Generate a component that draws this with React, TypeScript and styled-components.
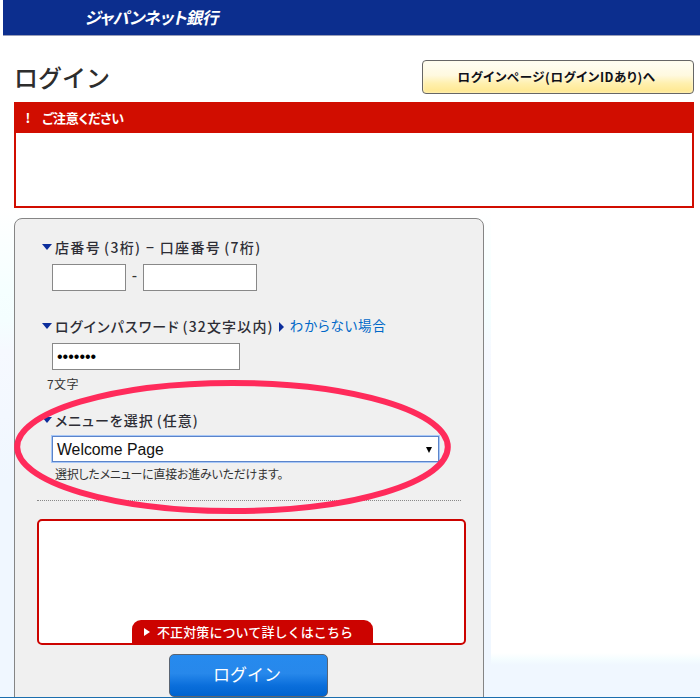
import React from 'react';
import styled, { createGlobalStyle } from 'styled-components';

const Global = createGlobalStyle`
  * { box-sizing: border-box; }
  html, body { margin: 0; padding: 0; overflow: hidden; }
  body { font-family: "Liberation Sans", "Noto Sans CJK JP", sans-serif; background: #fff; color: #333; }
  input, button { font: inherit; margin: 0; }
`;

const Page = styled.div`
  position: relative;
  width: 700px;
  height: 698px;
  overflow: hidden;
  display: flex;
  flex-direction: column;
  background: linear-gradient(#fff 0, #fff 208px, #f5ffff 290px, #f4feff 320px, #f6f9ff 350px, #f0f7ff 480px, #f0f7ff 100%);
  border-bottom: 1px solid #1b6eae;
`;

const Header = styled.header`
  height: 36px;
  flex: none;
  margin-left: 3px;
  padding-left: 83px;
  background: #0c2e8e;
  border-bottom: 1px solid #999eb8;
`;

const Logo = styled.div`
  width: 132px;
  color: #fff;
  font: 700 16.5px/34px "Noto Sans CJK JP", sans-serif;
  font-feature-settings: "palt";
  letter-spacing: -0.55px;
  white-space: nowrap;
  transform: skewX(-12deg);
`;

const TopArea = styled.div`
  flex: none;
  height: 172px;
  padding: 0 6px 0 14px;
  background: #fff;
`;

const TitleRow = styled.div`
  display: flex;
  justify-content: space-between;
  height: 66px;
  padding-top: 24px;
`;

const Title = styled.h1`
  margin: 0;
  font: 500 24px/34px "Noto Sans CJK JP", sans-serif;
  color: #2d2d2d;
`;

const PageLink = styled.button`
  width: 272px;
  height: 34px;
  padding: 0 3px 0 0;
  border: 1px solid #666;
  border-radius: 4px;
  background: linear-gradient(#fffef5 0%, #fff9df 45%, #fff0ae 70%, #ffe78d 100%);
  box-shadow: inset 0 0 3px #fff8dc;
  font: 700 12.5px/30px "Noto Sans CJK JP", sans-serif;
  font-feature-settings: "palt";
  letter-spacing: 0.58px;
  color: #101018;
  white-space: nowrap;
`;

const Notice = styled.section`
  height: 106px;
  border: 2px solid #d10d00;
  background: #fff;
`;

const NoticeHead = styled.div`
  display: flex;
  height: 29px;
  padding-left: 8px;
  gap: 10px;
  background: #d10d00;
  color: #fff;
  font: 700 13px/28px "Noto Sans CJK JP", sans-serif;
`;

const NoticeMark = styled.span`
  width: 8px;
  text-align: center;
`;

const NoticeText = styled.span`
  font-feature-settings: "palt";
  letter-spacing: -0.25px;
`;

const Body = styled.main`
  display: flex;
  flex: 1;
  min-height: 0;
  padding-left: 14px;
`;

const Panel = styled.form`
  flex: none;
  width: 470px;
  height: 540px;
  margin-top: 10px;
  padding: 18px 0 0 28px;
  border: 1px solid #858585;
  border-radius: 8px;
  background: #f0f0f0;
  display: flex;
  flex-direction: column;
  align-items: flex-start;
`;

const Side = styled.aside`
  flex: 1;
  height: 457px;
  margin-left: 7px;
  background: linear-gradient(#fff 445px, #f5fdff 451px, #f0f7ff 100%);
`;

const Label = styled.div<{ $top?: number; $spacing: number }>`
  display: flex;
  align-items: center;
  height: 20px;
  margin-top: ${p => p.$top ?? 0}px;
  margin-left: -1px;
  font: 500 14px/20px "Noto Sans CJK JP", sans-serif;
  font-feature-settings: "palt";
  letter-spacing: ${p => p.$spacing}px;
  color: #2d2d35;
  white-space: nowrap;
`;

const Paren = styled.span`
  margin-left: 3px;
`;

const Down = styled.i`
  width: 0;
  height: 0;
  margin-right: 3px;
  border: 5.5px solid transparent;
  border-top: 6px solid #0c2e9c;
  border-bottom: 0;
`;

const Right = styled.i<{ $white?: boolean }>`
  width: 0;
  height: 0;
  margin: ${p => (p.$white ? '0 7px 0 0' : '2px 6px 0 5px')};
  border: ${p => (p.$white ? 4 : 5)}px solid transparent;
  border-left: ${p => (p.$white ? '6px solid #fff' : '5px solid #0c2e9c')};
  border-right: 0;
`;

const HelpLink = styled.a`
  margin-bottom: 2px;
  font-weight: 400;
  font-size: 13.5px;
  letter-spacing: 0.8px;
  color: #0068c8;
`;

const Row = styled.div<{ $top: number }>`
  display: flex;
  align-items: center;
  margin: ${p => p.$top}px 0 0 9px;
`;

const Dash = styled.span`
  width: 17px;
  text-align: center;
  font-size: 16px;
  line-height: 20px;
  margin-top: -3px;
`;

const Field = styled.input<{ $w: number }>`
  width: ${p => p.$w}px;
  height: 27px;
  border: 1px solid #888;
  padding: 0 4px;
  background: #fff;
  color: #000;
  outline: 0;
`;

const Small = styled.div<{ $top: number; $left: number; $spacing: number }>`
  margin: ${p => p.$top}px 0 0 ${p => p.$left}px;
  font: 400 12px/16px "Noto Sans CJK JP", sans-serif;
  font-feature-settings: "palt";
  letter-spacing: ${p => p.$spacing}px;
  white-space: nowrap;
`;

const Select = styled.div`
  display: flex;
  align-items: center;
  justify-content: space-between;
  width: 387px;
  height: 26px;
  margin: 6px 0 0 9px;
  padding: 1px 6px 0 4px;
  border: 1px solid #5b84ca;
  outline: 1px solid #a8c8f8;
  background: #fff;
  font-size: 15.8px;
  line-height: 24px;
  color: #111;
`;

const Caret = styled.i`
  width: 0;
  height: 0;
  border: 3.5px solid transparent;
  border-top: 6px solid #000;
  border-bottom: 0;
`;

const Divider = styled.div`
  width: 424px;
  margin: 18px 0 0 -6px;
  border-top: 1px dotted #888;
`;

const Banner = styled.section`
  width: 429px;
  height: 126px;
  margin: 18px 0 0 -6px;
  border: 2px solid #cc0300;
  border-radius: 5px;
  background: #fff;
  display: flex;
  align-items: flex-end;
  padding-left: 93px;
`;

const BannerTab = styled.div`
  display: flex;
  align-items: center;
  width: 241px;
  height: 23px;
  padding: 1px 0 0 12px;
  background: #cc0300;
  border-radius: 9px 9px 0 0;
  color: #fff;
  font: 500 13px/22px "Noto Sans CJK JP", sans-serif;
  letter-spacing: 0.1px;
  white-space: nowrap;
`;

const Submit = styled.button`
  width: 159px;
  height: 43px;
  margin: 9px 0 0 126px;
  padding: 0 3px 3px 0;
  border: 1px solid #596472;
  border-radius: 5px;
  background: linear-gradient(#268aee 0%, #2788eb 45%, #0a6edb 75%, #0064cf 100%);
  color: #fff;
  font: 400 17px/38px "Noto Sans CJK JP", sans-serif;
`;

const Highlight = styled.svg`
  position: absolute;
  left: 14px;
  top: 379px;
  pointer-events: none;
`;

export default function App() {
  return (
    <>
      <Global />
      <Page>
        <Header><Logo>ジャパンネット銀行</Logo></Header>
        <TopArea>
          <TitleRow>
            <Title>ログイン</Title>
            <PageLink type="button">ログインページ(ログインIDあり)へ</PageLink>
          </TitleRow>
          <Notice>
            <NoticeHead><NoticeMark>!</NoticeMark><NoticeText>ご注意ください</NoticeText></NoticeHead>
          </Notice>
        </TopArea>
        <Body>
          <Panel>
            <Label $spacing={1.35}>
              <Down />店番号<Paren>(3桁)&nbsp;</Paren>−&nbsp;口座番号<Paren>(7桁)</Paren>
            </Label>
            <Row $top={7}>
              <Field $w={74} aria-label="店番号" />
              <Dash>-</Dash>
              <Field $w={114} aria-label="口座番号" />
            </Row>
            <Label $top={25} $spacing={1.15}>
              <Down />ログインパスワード<Paren>(32文字以内)</Paren><Right /><HelpLink>わからない場合</HelpLink>
            </Label>
            <Row $top={7}><Field $w={188} type="password" defaultValue="1234567" aria-label="パスワード" /></Row>
            <Small $top={6} $left={4} $spacing={0.4}>7文字</Small>
            <Label $top={18} $spacing={1}><Down />メニューを選択<Paren>(任意)</Paren></Label>
            <Select>Welcome Page<Caret /></Select>
            <Small $top={4} $left={12} $spacing={-0.25}>選択したメニューに直接お進みいただけます。</Small>
            <Divider />
            <Banner><BannerTab><Right $white />不正対策について詳しくはこちら</BannerTab></Banner>
            <Submit type="button">ログイン</Submit>
          </Panel>
          <Side />
        </Body>
        <Highlight width="438" height="136" viewBox="14 379 438 136">
          <ellipse cx="232.5" cy="447" rx="215.3" ry="64" fill="none" stroke="#ff2b5b" strokeWidth="6" />
        </Highlight>
      </Page>
    </>
  );
}
